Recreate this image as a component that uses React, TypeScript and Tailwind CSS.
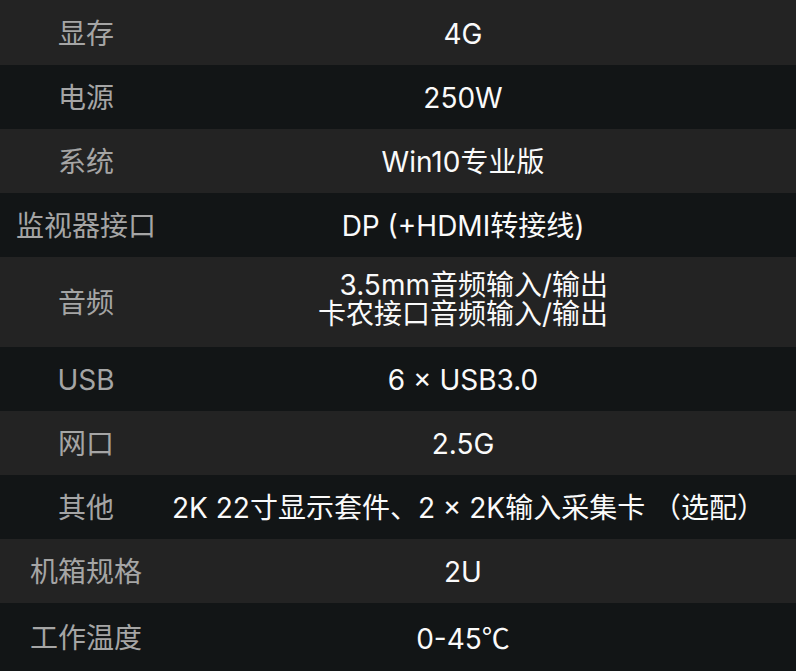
import React from "react"

const specs: { label: string; value: React.ReactNode; h: string }[] = [
  { label: "显存", value: "4G", h: "h-[65px]" },
  { label: "电源", value: "250W", h: "h-[64px]" },
  { label: "系统", value: "Win10专业版", h: "h-[64px]" },
  { label: "监视器接口", value: "DP (+HDMI转接线)", h: "h-[64px]" },
  {
    label: "音频",
    value: (
      <span className="inline-block text-right leading-[29px]">
        3.5mm音频输入/输出
        <br />
        卡农接口音频输入/输出
      </span>
    ),
    h: "h-[90px]",
  },
  { label: "USB", value: "6 × USB3.0", h: "h-[64px]" },
  { label: "网口", value: "2.5G", h: "h-[64px]" },
  { label: "其他", value: "2K 22寸显示套件、2 × 2K输入采集卡 （选配）", h: "h-[64px]" },
  { label: "机箱规格", value: "2U", h: "h-[64px]" },
  {
    label: "工作温度",
    value: (
      <>
        0-45<span className="font-['Noto_Sans_CJK_SC',sans-serif]">℃</span>
      </>
    ),
    h: "h-[68px]",
  },
]

export default function App() {
  return (
    <div
      className="w-[796px] h-[671px] overflow-hidden bg-[#121516] text-[28px]"
      style={{ fontFamily: 'Inter, "Noto Sans CJK SC", sans-serif' }}
    >
      {specs.map((row, i) => (
        <div
          key={row.label}
          className={`flex items-center ${row.h} ${i % 2 === 0 ? "bg-[#232323]" : "bg-[#121516]"}`}
        >
          <div className="w-[172px] shrink-0 text-center text-[#a5a5a5] pt-[2px]">{row.label}</div>
          <div className="flex-1 pr-[42px] text-center text-[#fafafa] pt-[2px]">{row.value}</div>
        </div>
      ))}
    </div>
  )
}
